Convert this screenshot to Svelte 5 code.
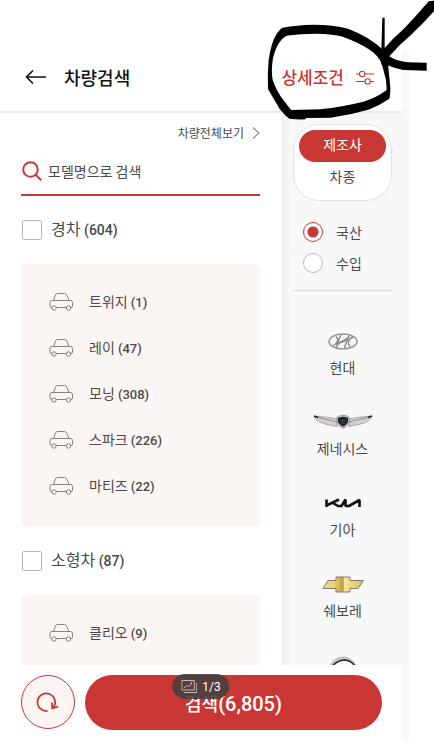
<script>
  let keyword = $state("");
  let tab = $state("maker");
  let origin = $state("domestic");

  const groups = [
    {
      name: "경차",
      count: 604,
      models: [
        { name: "트위지", count: 1 },
        { name: "레이", count: 47 },
        { name: "모닝", count: 308 },
        { name: "스파크", count: 226 },
        { name: "마티즈", count: 22 }
      ]
    },
    { name: "소형차", count: 87, models: [{ name: "클리오", count: 9 }] }
  ];

  const brands = [
    { id: "hyundai", name: "현대" },
    { id: "genesis", name: "제네시스" },
    { id: "kia", name: "기아" },
    { id: "chevrolet", name: "쉐보레" },
    { id: "renault", name: "" }
  ];
</script>

<div class="page">
  <div class="app">
    <header>
      <button class="back" aria-label="뒤로">
        <svg width="22" height="16" viewBox="0 0 22 16">
          <path d="M8 1.5 1.5 8 8 14.5M1.5 8H21" fill="none" stroke="#111" stroke-width="1.600" />
        </svg>
      </button>
      <h1>차량검색</h1>
      <button class="detail">
        상세조건
        <svg width="20" height="16" viewBox="0 0 20 16" fill="none" stroke="#c93735" stroke-width="1.100">
          <path d="M1 5H4.500M10 5H19M1 12.500H10M15.500 12.500H19" />
          <circle cx="7.200" cy="5" r="2.700" />
          <circle cx="12.700" cy="12.500" r="2.700" />
        </svg>
      </button>
    </header>

    <div class="content">
      <main>
        <a class="all" href="#all">
          차량전체보기
          <svg width="8" height="12" viewBox="0 0 8 12">
            <path d="M1 0.500 7 6 1 11.500" fill="none" stroke="#888" stroke-width="1.100" />
          </svg>
        </a>

        <label class="search">
          <svg width="20" height="20" viewBox="0 0 20 20" fill="none" stroke="#c93735" stroke-width="2">
            <circle cx="8.500" cy="8.500" r="7.300" />
            <path d="m13.700 13.700 5.500 5.500" />
          </svg>
          <input type="text" placeholder="모델명으로 검색" aria-label="모델명으로 검색" bind:value={keyword} />
        </label>

        {#each groups as g}
          <section>
            <label class="group">
              <input type="checkbox" />
              <span>{g.name} <b>({g.count})</b></span>
            </label>
            <ul>
              {#each g.models as m}
                <li>
                  <svg width="24" height="18" viewBox="0 0 24 18" fill="none" stroke="#858281" stroke-width="1">
                    <path d="M4.500 7.500 6.500 2Q7 0.500 8.500 0.500H15.500Q17 0.500 17.700 2L20 7.500" />
                    <path d="M3 14.500H2.500Q1 14.500 1 13V9.500Q1 7.500 3 7.500H21.500Q23.500 7.500 23.500 9.500V13Q23.500 14.500 22 14.500M7 14.500H17.500" />
                    <circle cx="5" cy="15" r="2.200" />
                    <circle cx="19.500" cy="15" r="2.200" />
                  </svg>
                  <a href="#model">{m.name} <b>({m.count})</b></a>
                </li>
              {/each}
            </ul>
          </section>
        {/each}
      </main>

      <aside>
        <div class="tabs">
          <button class:active={tab === "maker"} onclick={() => (tab = "maker")}>제조사</button>
          <button class:active={tab === "type"} onclick={() => (tab = "type")}>차종</button>
        </div>

        <div class="origin">
          <label><input type="radio" value="domestic" bind:group={origin} />국산</label>
          <label><input type="radio" value="import" bind:group={origin} />수입</label>
        </div>

        <div class="brands">
          {#each brands as b}
            <button aria-label={b.name || "르노"}>
              {#if b.id === "hyundai"}
                <svg width="60" height="20" viewBox="0 0 60 20">
                  <ellipse cx="30" cy="10.500" rx="14" ry="7.400" fill="#f6f5f5" stroke="#9b9795" stroke-width="1.500" />
                  <path d="M23 5.500C26 8 25 12 20.500 14.500M28 4C26 8 24 13 23.500 16.500M40 6C35 8 34 12 37 15.500M36.500 4C34 8 33 13 31.500 17" fill="none" stroke="#8a8583" stroke-width="1.400" />
                  <path d="M25 13.500C28 8 31 13 35 6.500" fill="none" stroke="#8a8583" stroke-width="2" />
                </svg>
              {:else if b.id === "genesis"}
                <svg width="60" height="20" viewBox="0 0 60 20">
                  <path d="M1 4C9 5 17 5 24 7L24 14.500C17 13 10 12 6 9.500 3 8 2 6 1 4ZM59 4C51 5 43 5 36 7L36 14.500C43 13 50 12 54 9.500 57 8 58 6 59 4Z" fill="#d3d0ce" stroke="#8f8b89" stroke-width="0.700" />
                  <path d="M2 4.500C9 7.500 18 7 24 10.500M58 4.500C51 7.500 42 7 36 10.500" fill="none" stroke="#8a8684" stroke-width="0.900" />
                  <path d="M1 4 5 5.500M59 4 55 5.500" stroke="#222" stroke-width="1.600" />
                  <path d="M24 5Q30 1.500 36 5 39 12 30 16.500 21 12 24 5Z" fill="#c9cacc" stroke="#8c8d90" stroke-width="0.800" />
                  <path d="M25 6Q30 3.500 35 6 36.500 11.500 30 14.800 23.500 11.500 25 6Z" fill="#1d2633" />
                  <path d="M27 8.500H33M28 11H32" stroke="#536071" stroke-width="0.700" />
                </svg>
              {:else if b.id === "kia"}
                <svg width="60" height="20" viewBox="0 0 60 20" fill="none" stroke="#111" stroke-width="2.600" stroke-linejoin="bevel">
                  <path d="M13.500 14V6.500M13.500 12.500 26 6.500M19 9.500 25 13H28.500L32.500 6.500V13H36L46.500 7V14" />
                </svg>
              {:else if b.id === "chevrolet"}
                <svg width="60" height="20" viewBox="0 0 60 20">
                  <defs>
                    <linearGradient id="gold">
                      <stop offset="0" stop-color="#f1dd83" />
                      <stop offset="0.300" stop-color="#e8cd72" />
                      <stop offset="0.500" stop-color="#bd983e" />
                      <stop offset="0.520" stop-color="#f7e89c" />
                      <stop offset="1" stop-color="#dcbb55" />
                    </linearGradient>
                  </defs>
                  <path d="M23 3H37V6.500H50.500L45 14.500H37V18H23V14.500H10L15 6.500H23Z" fill="url(#gold)" stroke="#817a70" stroke-width="1" />
                </svg>
              {:else}
                <svg width="60" height="20" viewBox="0 0 60 20" fill="none">
                  <circle cx="30" cy="16" r="13" stroke="#c1c5cf" stroke-width="3" />
                  <path d="M18 12.500Q24 5 32 5 38 5.500 42 11" stroke="#202228" stroke-width="1.500" />
                </svg>
              {/if}
              <span>{b.name}</span>
            </button>
          {/each}
        </div>
      </aside>
    </div>

    <footer>
      <button class="reset" aria-label="초기화">
        <svg width="24" height="22" viewBox="0 0 24 22" fill="none" stroke="#c93735" stroke-width="1.800">
          <path d="M11.500 20A8.800 8.800 0 1 1 17 17" />
          <path d="M15.800 11.500 16.300 17.300 22.300 15.500" />
        </svg>
      </button>
      <button class="submit">검색<b>(6,805)</b></button>
      <div class="counter">
        <svg width="16" height="13" viewBox="0 0 16 13" fill="none" stroke="#c5bcbb" stroke-width="1">
          <path d="M0.500 0.500H13V10H0.500ZM3 12.500H15.500V3" />
          <path d="m2.500 8 3-2.500 2 1 3-2.500" />
          <circle cx="10" cy="3" r="0.500" />
        </svg>
        1/3
      </div>
    </footer>
  </div>
  <div class="edge"></div>

  <!-- pen marks over the header -->
  <svg class="pen" width="174" height="125" viewBox="0 0 522 375">
    <path
      fill-rule="evenodd"
      d="M68 83Q110 75 160 74 220 74 264 86 328 110 370 150L384 192 391 262Q391 286 388 296 360 316 325 329 270 345 212 353L137 354V358Q110 359 88 356 74 346 59 327L24 267Q22 220 26 180 33 130 48 105 58 88 68 83ZM80 107Q120 101 170 101 220 102 248 110 300 129 330 150 354 166 365 190L378 240 380 270Q350 293 310 305 250 320 180 328L94 330Q86 322 75 306 52 280 38 240 33 210 39 174 48 137 64 120 70 112 80 107Z"
    />
    <path d="M364 150 367 53H374L374 144Q398 116 430 88 466 51 506 4L522 2V34Q490 70 452 106 420 132 388 169 410 184 445 187L500 188V212L430 210Q405 206 383 196L364 194Z" />
  </svg>
</div>

<style>
  :global(body) {
    margin: 0;
    background: #fff;
  }

  .page {
    position: relative;
    display: flex;
    height: calc(100vh - 15px);
    padding-right: 25px;
    overflow: hidden;
    font-family: "Noto Sans CJK KR", sans-serif;
    font-size: 14px;
    color: #4a4a4a;
  }

  .page * {
    box-sizing: border-box;
  }

  button,
  input {
    margin: 0;
    padding: 0;
    border: none;
    background: none;
    font: inherit;
    color: inherit;
  }

  button {
    cursor: pointer;
  }

  a {
    color: inherit;
    text-decoration: none;
  }

  svg {
    display: block;
    flex: none;
  }

  b {
    font-family: Roboto, sans-serif;
    font-size: 13px;
    font-weight: 500;
  }

  .app {
    flex: 1;
    min-width: 0;
    display: flex;
    flex-direction: column;
  }

  .edge {
    width: 7px;
    margin-top: 51px;
    background: #f8f8f8;
  }

  .pen {
    position: absolute;
    top: 0;
    right: 0;
    pointer-events: none;
  }

  header {
    display: flex;
    align-items: center;
    height: 113px;
    padding: 42px 27px 0 25px;
    border-bottom: 2px solid #ebebeb;
  }

  h1 {
    flex: 1;
    margin: 0 0 0 17px;
    font-size: 18px;
    font-weight: 500;
    line-height: 24px;
    color: #111;
  }

  .detail {
    display: flex;
    align-items: center;
    gap: 11px;
    font-size: 17px;
    font-weight: 500;
    color: #c93735;
  }

  .content {
    flex: 1;
    min-height: 0;
    display: flex;
    overflow: hidden;
  }

  main {
    flex: 1;
    padding: 10px 22px 0 21px;
  }

  .all {
    display: flex;
    align-items: center;
    justify-content: flex-end;
    gap: 8px;
    font-size: 12px;
    line-height: 20px;
  }

  .search {
    display: flex;
    align-items: center;
    gap: 6px;
    height: 53px;
    padding: 5px 1px 0;
    border-bottom: 2px solid #c93735;
  }

  .search input {
    flex: 1;
    min-width: 0;
    outline: none;
  }

  .search input::placeholder {
    color: #4a4a4a;
    opacity: 1;
  }

  .group {
    display: flex;
    align-items: center;
    gap: 9px;
    height: 68px;
    padding-left: 1px;
    font-size: 16px;
    line-height: 24px;
  }

  .group span {
    padding-bottom: 2px;
  }

  .group b {
    font-size: 14px;
  }

  .group input {
    appearance: none;
    width: 20px;
    height: 20px;
    border: 1px solid #b9b9b9;
    border-radius: 2px;
    background: #fff;
  }

  ul {
    display: flex;
    flex-direction: column;
    justify-content: space-between;
    min-height: 263px;
    margin: 0;
    padding: 27px 28px 30px;
    border-radius: 5px;
    background: #fbf6f4;
    list-style: none;
  }

  li {
    display: flex;
    align-items: center;
    gap: 16px;
    line-height: 20px;
  }

  aside {
    width: 120px;
    padding: 11px 10px 0 11px;
    background: linear-gradient(to right, #efefef, #f8f8f8 8px);
  }

  .tabs {
    display: flex;
    flex-direction: column;
    height: 77px;
    padding: 5px;
    border: 1px solid #e2e2e2;
    border-radius: 26px;
    background: #fff;
  }

  .tabs button {
    height: 32px;
    padding-bottom: 4px;
    border-radius: 16px;
    line-height: 28px;
  }

  .tabs .active {
    background: #c93735;
    color: #fff;
  }

  .origin {
    display: flex;
    flex-direction: column;
    gap: 11px;
    padding: 21px 0 17px 10px;
    border-bottom: 1px solid #dcdcdc;
  }

  .origin label {
    display: flex;
    align-items: center;
    gap: 13px;
    line-height: 20px;
  }

  .origin input {
    appearance: none;
    width: 20px;
    height: 20px;
    border: 1px solid #b9b9b9;
    border-radius: 50%;
    background: #fff;
  }

  .origin input:checked {
    border-color: #c93735;
    background: radial-gradient(circle, #c93735 5px, #fff 6px);
  }

  .brands {
    display: flex;
    flex-direction: column;
    gap: 31px;
    padding-top: 40px;
  }

  .brands button {
    display: flex;
    flex-direction: column;
    align-items: center;
    gap: 5px;
    height: 50px;
    line-height: 22px;
  }

  footer {
    position: relative;
    display: flex;
    gap: 10px;
    height: 75px;
    padding: 10px 20px 10px 21px;
    background: #fff;
  }

  .reset {
    display: flex;
    align-items: center;
    justify-content: center;
    width: 54px;
    height: 54px;
    border: 1px solid #c93735;
    border-radius: 50%;
    background: #fbf6f4;
  }

  .submit {
    flex: 1;
    height: 55px;
    border-radius: 28px;
    background: #c93735;
    font-size: 18px;
    font-weight: 500;
    color: #fff;
  }

  .submit b {
    font-size: 20px;
  }

  .counter {
    position: absolute;
    top: 9px;
    left: 50%;
    transform: translateX(-50%);
    display: flex;
    align-items: center;
    gap: 5px;
    height: 25px;
    padding: 0 9px;
    border-radius: 13px;
    background: rgba(68, 64, 64, 0.88);
    font-family: Roboto, sans-serif;
    font-size: 12px;
    color: #fff;
  }
</style>
